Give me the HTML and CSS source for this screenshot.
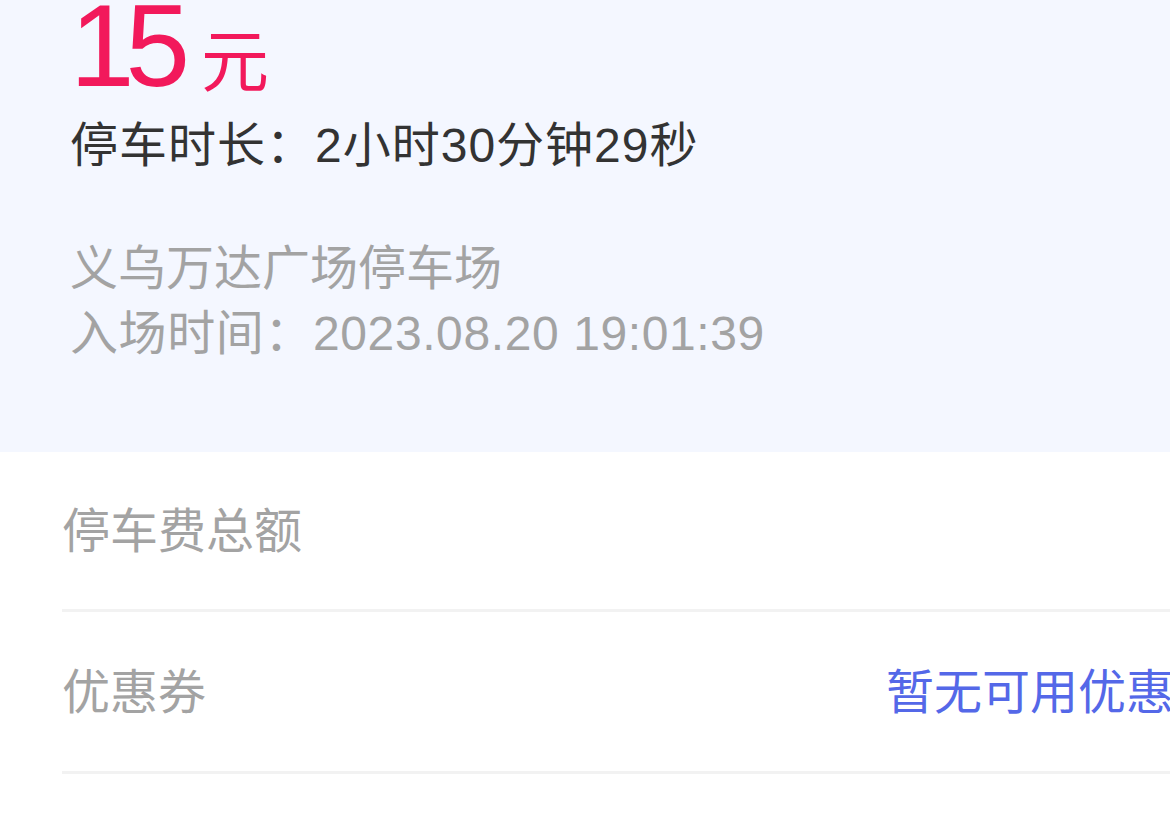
FILE: index.html
```html
<!DOCTYPE html>
<html lang="zh-CN">
<head>
    <meta charset="UTF-8">
    <meta name="viewport" content="width=device-width, initial-scale=1.0">
    <title>停车缴费</title>
    <link rel="stylesheet" href="styles.css">
</head>
<body>
    <div class="summary">
        <div class="amount">
            <span class="amount-num">15</span>
            <span class="amount-unit">元</span>
        </div>
        <div class="duration">停车时长：2小时30分钟29秒</div>
        <div class="lot">义乌万达广场停车场</div>
        <div class="entry">入场时间：2023.08.20 19:01:39</div>
    </div>

    <div class="rows">
        <div class="row">
            <span class="row-label">停车费总额</span>
            <span class="row-value"></span>
        </div>
        <div class="row">
            <span class="row-label">优惠券</span>
            <span class="row-value link">暂无可用优惠券</span>
        </div>
    </div>
</body>
</html>
```

FILE: styles.css
```css
html, body {
    margin: 0;
    padding: 0;
    background-color: #fff;
    overflow: hidden;
}

body {
    width: 1170px;
    height: 816px;
    font-family: "Liberation Sans", "Noto Sans CJK SC", sans-serif;
}

/* 顶部金额区域 */
.summary {
    display: flex;
    flex-direction: column;
    background-color: #f4f7ff;
    height: 452px;
    padding-left: 70px;
    box-sizing: border-box;
}

.amount {
    display: flex;
    align-items: baseline;
    gap: 20px;
    color: #f2195b;
    height: 104px;
    margin-top: -12px;
}

.amount-num {
    font-size: 116px;
    line-height: 1;
    letter-spacing: -9px;
}

.amount-unit {
    font-size: 68px;
    font-family: "Noto Sans CJK SC", sans-serif;
    line-height: 1;
}

.duration {
    font-size: 48px;
    color: #333;
    line-height: 60px;
    margin-top: 24px;
    letter-spacing: 1px;
}

.lot, .entry {
    font-size: 48px;
    color: #a3a3a3;
    line-height: 65px;
}

.lot {
    margin-top: 60px;
}

.entry {
    letter-spacing: 0.6px;
}

/* 费用明细列表 */
.rows {
    padding-left: 62px;
}

.row {
    display: flex;
    align-items: center;
    height: 160px;
    padding-bottom: 8px;
    box-sizing: border-box;
    border-bottom: 3px solid #f2f2f2;
    white-space: nowrap;
    font-size: 48px;
}

.row + .row {
    height: 162px;
}

.row-label {
    flex: 0 0 824px;
    color: #a3a3a3;
}

.row-value.link {
    color: #5468e8;
}
```
